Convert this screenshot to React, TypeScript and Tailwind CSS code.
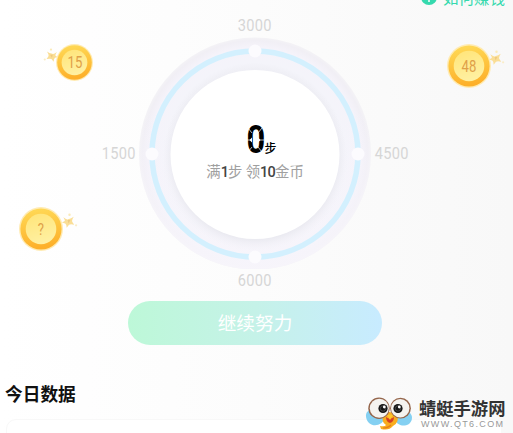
import React from "react";

const cjk = "font-['Noto_Sans_CJK_SC',sans-serif]";

function Sparkle({ className, flip = false }: { className: string; flip?: boolean }) {
  return (
    <svg viewBox="0 0 18 18" className={`${className} ${flip ? "-scale-x-100" : ""}`}>
      <path d="M2.5 4.5 Q6 7.5 7.5 6.5 Q11 6 13.5 4 Q11 8 12 9.5 L14 12.5 Q10 11.5 8.5 12.5 L6 15.5 Q6 12 4.5 11 L1 10 Q4.5 9 4 7.5 Z" fill="#fade96" />
      <path d="M7 7.5 L10 7.5 L8 11 Z" fill="#efca80" />
      <circle cx="9" cy="1.8" r="1.3" fill="#fbebb9" />
      <circle cx="16" cy="13" r="1.2" fill="#faedc8" />
    </svg>
  );
}

function Coin({ label, box, text, id }: { label: string; box: string; text: string; id: string }) {
  return (
    <div className={`absolute flex items-center justify-center ${box}`}>
      <svg viewBox="0 0 44 44" className="absolute inset-0 size-full">
        <defs>
          <linearGradient id={`${id}r`} x1="0" y1="0" x2="0.15" y2="1">
            <stop offset="0" stopColor="#ffdb58" />
            <stop offset="1" stopColor="#fdb02a" />
          </linearGradient>
          <linearGradient id={`${id}f`} x1="0" y1="0" x2="0.3" y2="1">
            <stop offset="0" stopColor="#ffe478" />
            <stop offset="1" stopColor="#fff0a0" />
          </linearGradient>
        </defs>
        <circle cx="22" cy="22" r="22" fill="#ffebb2" />
        <circle cx="22" cy="22" r="20.6" fill={`url(#${id}r)`} />
        <circle cx="22" cy="22" r="15.3" fill={`url(#${id}f)`} />
      </svg>
      <span className={`relative pt-px font-['Roboto',sans-serif] leading-none text-[#e0a048] ${text}`}>{label}</span>
    </div>
  );
}

function Gauge() {
  return (
    <svg viewBox="0 0 232 232" className="absolute inset-0 size-full">
      <defs>
        <radialGradient id="band" cx="116" cy="116" r="116" gradientUnits="userSpaceOnUse">
          <stop offset="0.73" stopColor="#f0f0f6" />
          <stop offset="0.78" stopColor="#f4f4fa" />
          <stop offset="0.91" stopColor="#f5f3fa" />
          <stop offset="0.97" stopColor="#f1eff5" />
          <stop offset="1" stopColor="#f4f3f6" />
        </radialGradient>
        <linearGradient id="low" x1="0" y1="0" x2="0" y2="1">
          <stop offset="0.3" stopColor="#f6f4fb" stopOpacity="0" />
          <stop offset="1" stopColor="#f7f5fb" stopOpacity="0.95" />
        </linearGradient>
        <radialGradient id="shade" cx="116" cy="121" r="93" gradientUnits="userSpaceOnUse">
          <stop offset="0.84" stopColor="#e5e5ec" />
          <stop offset="1" stopColor="#f2f2f8" stopOpacity="0" />
        </radialGradient>
      </defs>
      <circle cx="116" cy="116.5" r="116" fill="url(#band)" />
      <circle cx="116" cy="116.5" r="116" fill="url(#low)" />
      <circle cx="116" cy="121" r="93" fill="url(#shade)" />
      <circle cx="116" cy="117" r="103" fill="none" stroke="#d3f0fe" strokeWidth="5.5" />
      <circle cx="116" cy="117.5" r="84.5" fill="#ffffff" />
      <circle cx="116" cy="14" r="6.5" fill="#fcfbfe" />
      <circle cx="219" cy="117" r="6.5" fill="#fcfbfe" />
      <circle cx="116" cy="220" r="6.5" fill="#fcfbfe" />
      <circle cx="13" cy="117" r="6.5" fill="#fcfbfe" />
    </svg>
  );
}

function Mark({ children, className = "" }: { children: string; className?: string }) {
  return (
    <span className={`inline-block font-['Roboto',sans-serif] text-[17px] leading-none tracking-[0.3px] text-[#d6d6d6] scale-x-[0.86] ${className}`}>
      {children}
    </span>
  );
}

function Count({ children }: { children: string }) {
  return <b className="font-['Roboto',sans-serif] text-[14.5px] font-medium tracking-[-0.8px] text-[#444]">{children}</b>;
}

function SegmentDigit({ children }: { children: string }) {
  return (
    <span className="relative flex h-[28px] w-[18px] items-center justify-center">
      <span className="font-['Roboto',sans-serif] text-[38px] font-bold leading-none scale-x-[0.86]">{children}</span>
      <svg viewBox="0 0 18 28" className="absolute inset-0 size-full">
        <path d="M0 14 H5.5 M12.5 14 H18 M2 2 L6 7 M16 2 L12 7 M2 26 L6 21 M16 26 L12 21" stroke="white" strokeWidth="0.7" />
        <path d="M3.5 14 L6 11.5 V16.5 Z M14.5 14 L12 11.5 V16.5 Z" fill="white" />
      </svg>
    </span>
  );
}

function Dragonfly() {
  return (
    <svg viewBox="0 0 48 34" className="h-[34px] w-[48px] shrink-0">
      <path d="M7 13 C-1 13 0 22 4 26 C10 31 18 27 20 21 Z" fill="#84d0f2" />
      <path d="M39 14 C48 14 49 23 44 27 C37 31 31 27 29 21 Z" fill="#84d0f2" />
      <path d="M18 18 Q24 12 32 18 Q35 25 28 29 Q24 34 16 32 L15 29 Q20 30 21 28 Q16 25 18 18 Z" fill="#f9ad1f" />
      <path d="M18 31 Q23 31 26 28" stroke="#e8801c" strokeWidth="1.2" fill="none" />
      <path d="M21 20 Q25 23 29 20 Q29 25 25 26 Q21 25 21 20 Z" fill="#d74024" />
      <path d="M22 18 Q25 17 28 18 L25 23 Z" fill="#ffc62c" />
      <circle cx="14" cy="11.2" r="10.7" fill="#94654b" />
      <circle cx="35.5" cy="11.2" r="10.4" fill="#94654b" />
      <circle cx="14.3" cy="11.2" r="9.5" fill="#f5f3ef" />
      <circle cx="35.2" cy="11.2" r="9.2" fill="#f5f3ef" />
      <circle cx="18" cy="11.5" r="4.6" fill="#151515" />
      <circle cx="33" cy="11.5" r="4.6" fill="#151515" />
      <circle cx="18" cy="11.5" r="2.7" fill="none" stroke="#666" strokeWidth="0.6" />
      <circle cx="33" cy="11.5" r="2.7" fill="none" stroke="#666" strokeWidth="0.6" />
      <circle cx="19.3" cy="10" r="1.4" fill="white" />
      <circle cx="34.3" cy="10" r="1.4" fill="white" />
    </svg>
  );
}

export default function App() {
  return (
    <main className={`relative flex h-[433px] w-[513px] flex-col overflow-hidden bg-linear-to-r from-white via-[#fcfcfc] to-[#f8f8f8] ${cjk}`}>
      <header className="flex h-[13px] shrink-0 items-start justify-end pr-[8px]">
        <div className="-mt-[12px] flex items-center gap-[6px] text-[#35d9ae]">
          <span className="flex size-[16px] items-end justify-center rounded-full bg-[#35d9ae] pb-[3px]">
            <span className="size-[2px] rounded-full bg-white" />
          </span>
          <span className="text-[15.5px] leading-[18px]">如何赚钱</span>
        </div>
      </header>

      <section className="flex w-[510px] shrink-0 flex-col items-center">
        <div className="flex h-[24px] items-center"><Mark>3000</Mark></div>
        <div className="flex h-[232px] w-full items-center justify-center">
          <Mark className="mr-px">1500</Mark>
          <div className="relative flex size-[232px] shrink-0 flex-col items-center">
            <Gauge />
            <div className="relative mt-[89px] flex items-end pl-[13px] text-black">
              <SegmentDigit>0</SegmentDigit>
              <span className="-mb-[1px] text-[12px] font-medium leading-[15px]">步</span>
            </div>
            <p className="relative mt-[6px] whitespace-pre text-[14.4px] leading-[21px] text-[#a0a0a0]">
              满<Count>1</Count>步 领<Count>10</Count>金币
            </p>
          </div>
          <Mark className="ml-px">4500</Mark>
        </div>
        <div className="flex h-[22px] items-center"><Mark>6000</Mark></div>
        <button className="mt-[10px] h-[44px] w-[254px] rounded-full bg-linear-to-r from-[#bdf8d8] via-[#c5f2e8] to-[#c8ebff] pb-[2px] text-[18.7px] leading-[42px] text-white">
          继续努力
        </button>
      </section>

      <section className="mt-[35px] flex flex-col">
        <h2 className="pl-[5px] text-[17.7px] font-bold leading-[27px] text-[#111]">今日数据</h2>
        <div className="ml-[6px] mt-[12px] h-[30px] w-[496px] rounded-t-[10px] border border-[#f8f8f8] bg-white" />
      </section>

      <Sparkle flip className="absolute left-[43px] top-[48px] size-[16px]" />
      <Coin id="a" label="15" box="left-[56px] top-[44px] size-[37px]" text="text-[16px] scale-x-[0.82]" />
      <Sparkle className="absolute left-[488px] top-[50px] size-[17px]" />
      <Coin id="b" label="48" box="left-[447px] top-[44px] size-[44px]" text="text-[16px] scale-x-[0.82]" />
      <Sparkle className="absolute left-[61px] top-[213px] size-[17px]" />
      <Coin id="c" label="?" box="left-[19px] top-[207px] size-[44px]" text="text-[16px] scale-x-[0.82]" />

      <aside className="absolute left-[365px] top-[397px] flex items-start gap-[6px]">
        <Dragonfly />
        <div className="flex flex-col">
          <span className="whitespace-nowrap text-[17.3px] font-bold leading-[22px] text-[#333]">蜻蜓手游网</span>
          <span className="pl-[2px] font-['Liberation_Sans',sans-serif] text-[9px] leading-[10px] tracking-[1.35px] text-[#999]">WWW.QT6.COM</span>
        </div>
      </aside>
    </main>
  );
}
